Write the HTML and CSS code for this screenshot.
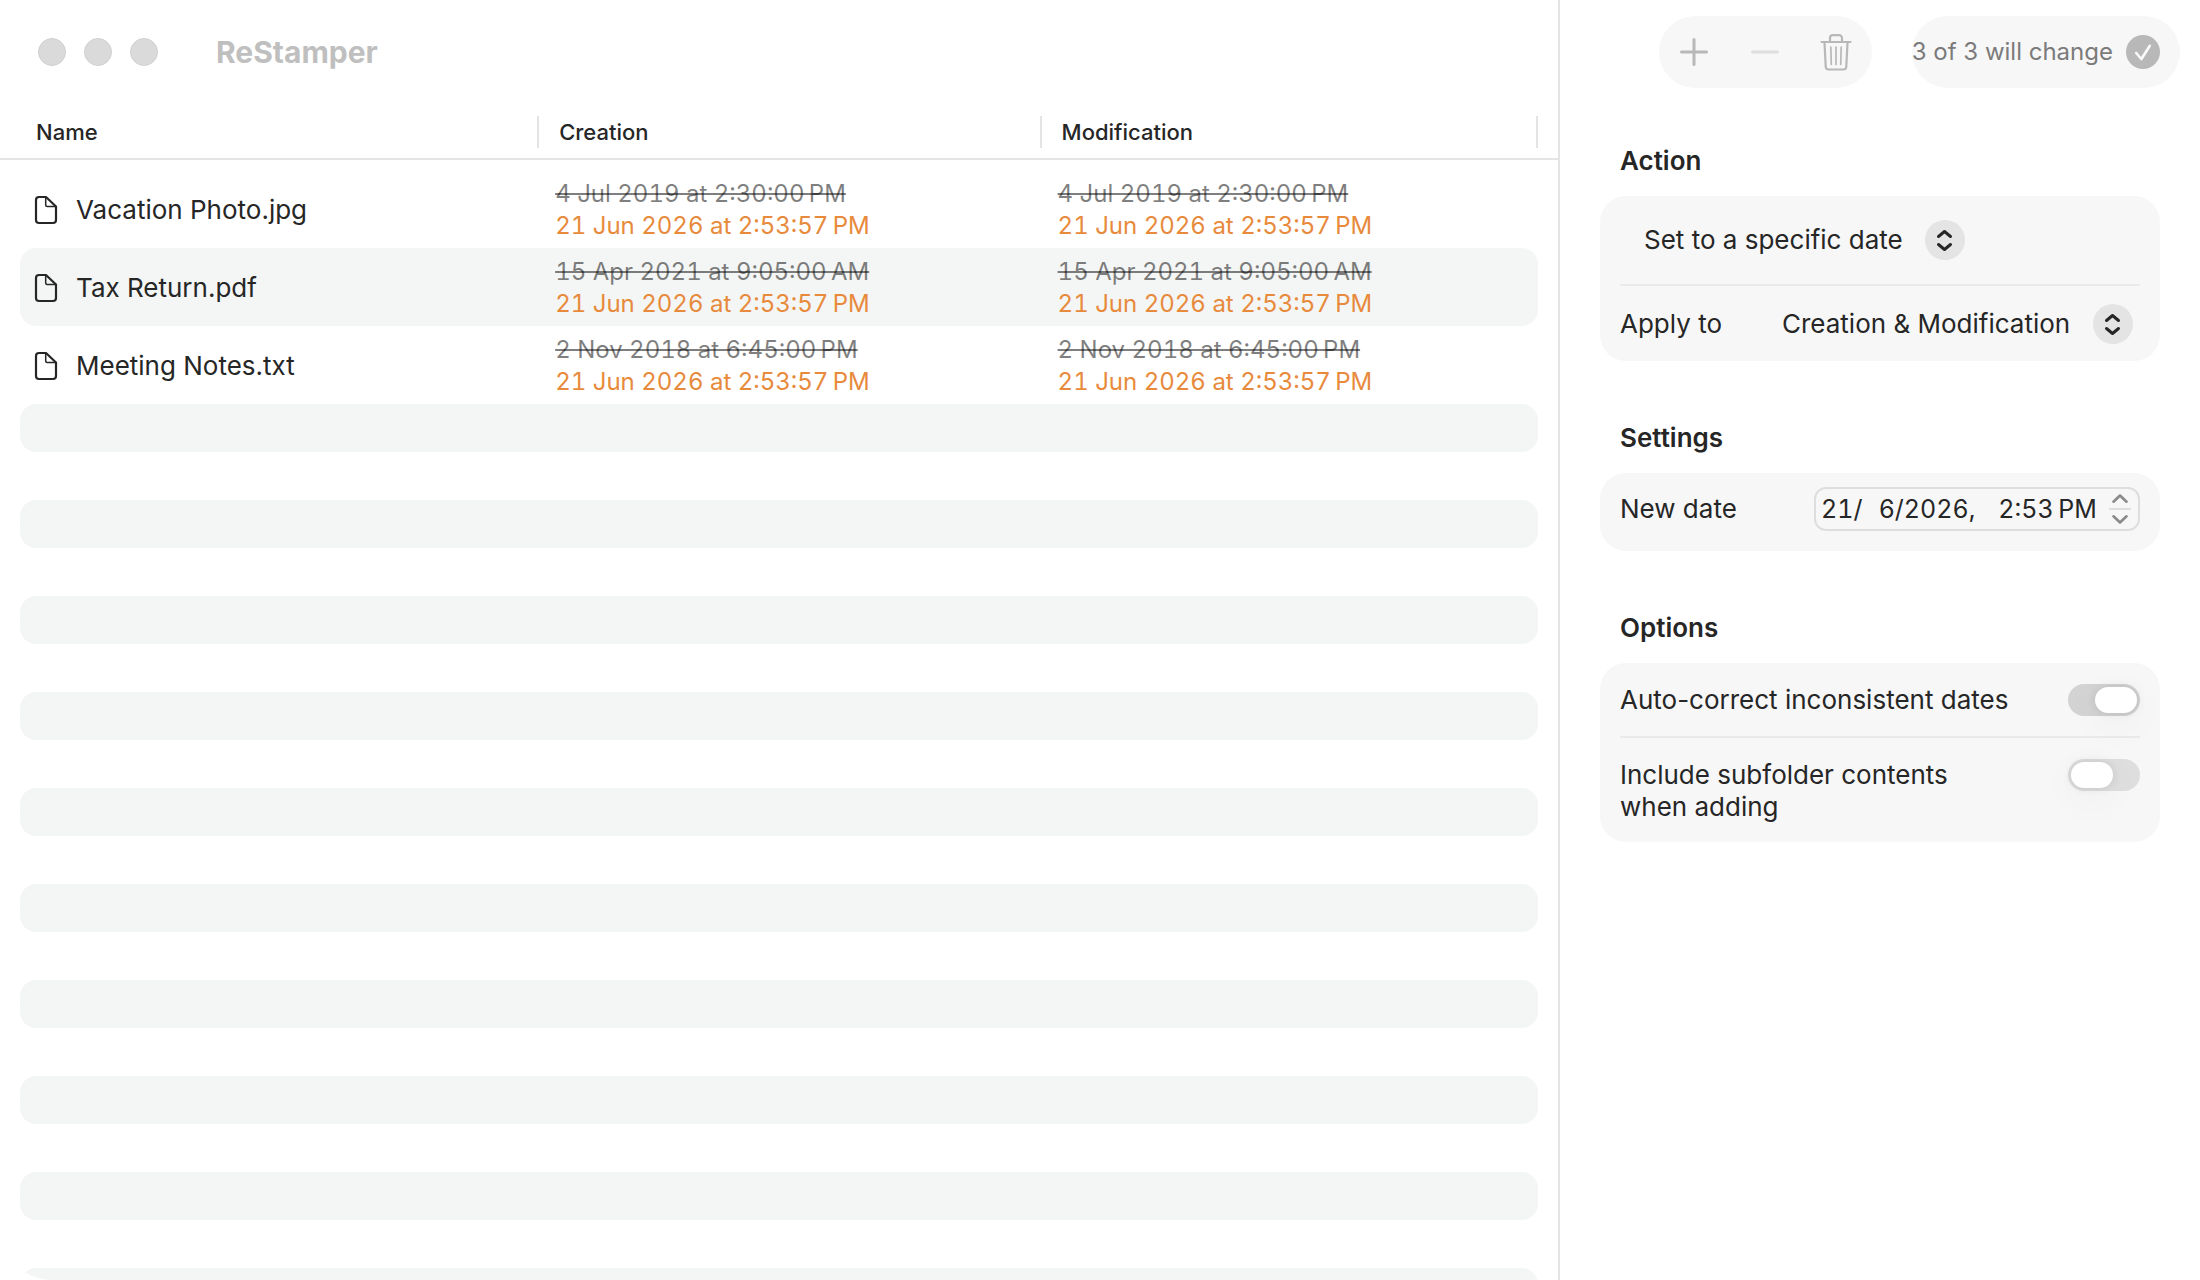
FILE: index.html
```html
<!DOCTYPE html>
<html lang="en">
<head>
<meta charset="utf-8">
<meta name="viewport" content="width=device-width, initial-scale=1">
<title>ReStamper</title>
<link rel="stylesheet" href="styles.css">
</head>
<body>
<svg class="symbols" aria-hidden="true">
  <symbol id="doc" viewBox="0 0 24 30">
    <path d="M5 2H12L22 11.500V25A3 3 0 0 1 19 28H5A3 3 0 0 1 2 25V5A3 3 0 0 1 5 2Z" fill="none" stroke="#262626" stroke-width="2.200" stroke-linejoin="round"/>
    <path d="M11.700 2.500V10a1.500 1.500 0 0 0 1.500 1.500H22" fill="none" stroke="#262626" stroke-width="1.500"/>
  </symbol>
  <symbol id="updown" viewBox="0 0 40 40">
    <circle cx="20" cy="20" r="20" fill="#e4e4e4"/>
    <path d="M13.500 16.500 19.500 11.500 25.500 16.500M13.500 24.500 19.500 29.500 25.500 24.500" fill="none" stroke="#262626" stroke-width="3" stroke-linecap="round" stroke-linejoin="round"/>
  </symbol>
</svg>
<div class="window">
  <main class="content">
    <header class="titlebar">
      <div class="lights"><button type="button" aria-label="Close"></button><button type="button" aria-label="Minimize"></button><button type="button" aria-label="Zoom"></button></div>
      <h1>ReStamper</h1>
    </header>
    <div class="list">
      <table class="files">
        <colgroup><col class="col-name"><col class="col-created"><col></colgroup>
        <thead>
          <tr><th scope="col"><span>Name</span></th><th scope="col"><span>Creation</span></th><th scope="col"><span>Modification</span></th></tr>
        </thead>
        <tbody>
          <tr>
            <td><div class="file"><svg><use href="#doc"/></svg>Vacation Photo.jpg</div></td>
            <td class="dates"><del>4 Jul 2019 at 2:30:00&#8239;PM</del><ins>21 Jun 2026 at 2:53:57&#8239;PM</ins></td>
            <td class="dates"><del>4 Jul 2019 at 2:30:00&#8239;PM</del><ins>21 Jun 2026 at 2:53:57&#8239;PM</ins></td>
          </tr>
          <tr>
            <td><div class="file"><svg><use href="#doc"/></svg>Tax Return.pdf</div></td>
            <td class="dates"><del>15 Apr 2021 at 9:05:00&#8239;AM</del><ins>21 Jun 2026 at 2:53:57&#8239;PM</ins></td>
            <td class="dates"><del>15 Apr 2021 at 9:05:00&#8239;AM</del><ins>21 Jun 2026 at 2:53:57&#8239;PM</ins></td>
          </tr>
          <tr>
            <td><div class="file"><svg><use href="#doc"/></svg>Meeting Notes.txt</div></td>
            <td class="dates"><del>2 Nov 2018 at 6:45:00&#8239;PM</del><ins>21 Jun 2026 at 2:53:57&#8239;PM</ins></td>
            <td class="dates"><del>2 Nov 2018 at 6:45:00&#8239;PM</del><ins>21 Jun 2026 at 2:53:57&#8239;PM</ins></td>
          </tr>
          <tr class="empty"><td></td><td></td><td></td></tr>
          <tr class="empty"><td></td><td></td><td></td></tr>
          <tr class="empty"><td></td><td></td><td></td></tr>
          <tr class="empty"><td></td><td></td><td></td></tr>
          <tr class="empty"><td></td><td></td><td></td></tr>
          <tr class="empty"><td></td><td></td><td></td></tr>
          <tr class="empty"><td></td><td></td><td></td></tr>
          <tr class="empty"><td></td><td></td><td></td></tr>
          <tr class="empty"><td></td><td></td><td></td></tr>
          <tr class="empty"><td></td><td></td><td></td></tr>
          <tr class="empty"><td></td><td></td><td></td></tr>
          <tr class="empty"><td></td><td></td><td></td></tr>
          <tr class="empty"><td></td><td></td><td></td></tr>
          <tr class="empty"><td></td><td></td><td></td></tr>
          <tr class="empty"><td></td><td></td><td></td></tr>
          <tr class="empty"><td></td><td></td><td></td></tr>
          <tr class="empty"><td></td><td></td><td></td></tr>
          <tr class="empty"><td></td><td></td><td></td></tr>
          <tr class="empty"><td></td><td></td><td></td></tr>
        </tbody>
      </table>
    </div>
  </main>

  <aside class="inspector">
    <div class="toolbar">
      <div class="pill tools">
        <button type="button" aria-label="Add files"><svg width="28" height="28" viewBox="0 0 28 28"><path d="M14 1.500V26.500M1.500 14H26.500" stroke="#b8b8b8" stroke-width="3" stroke-linecap="round"/></svg></button>
        <button type="button" aria-label="Remove file" disabled><svg width="28" height="28" viewBox="0 0 28 28"><path d="M1.500 14H26.500" stroke="#dedede" stroke-width="3" stroke-linecap="round"/></svg></button>
        <button type="button" aria-label="Remove all files"><svg width="32" height="38" viewBox="0 0 32 38" fill="none" stroke="#b8b8b8" stroke-linecap="round" stroke-linejoin="round"><path d="M1.500 9H30.500" stroke-width="2.200"/><path d="M10 8.500V5A2.800 2.800 0 0 1 12.800 2.200H19.200A2.800 2.800 0 0 1 22 5V8.500" stroke-width="2.200"/><path d="M4.500 9.500 5.700 33.500A3 3 0 0 0 8.700 36.500H23.300A3 3 0 0 0 26.300 33.500L27.500 9.500" stroke-width="2.200"/><path d="M10.800 14 11.300 31.500M16 14V31.500M21.200 14 20.700 31.500" stroke-width="1.700"/></svg></button>
      </div>
      <div class="pill status">
        <span>3 of 3 will change</span>
        <button type="button" aria-label="Apply changes"><svg width="34" height="34" viewBox="0 0 34 34"><circle cx="17" cy="17" r="17" fill="#b8b8b8"/><path d="M10.200 18 15.400 24 23.800 10.800" fill="none" stroke="#fafafa" stroke-width="2.600" stroke-linecap="round" stroke-linejoin="round"/></svg></button>
      </div>
    </div>

    <form class="sections">
      <section>
        <h2>Action</h2>
        <div class="card">
          <div class="row action">
            <div class="picker">
              <select aria-label="Action"><option>Set to a specific date</option></select>
              <svg><use href="#updown"/></svg>
            </div>
          </div>
          <div class="row apply">
            <label for="apply">Apply to</label>
            <div class="picker">
              <select id="apply"><option>Creation &amp; Modification</option><option>Creation</option><option>Modification</option></select>
              <svg><use href="#updown"/></svg>
            </div>
          </div>
        </div>
      </section>

      <section>
        <h2>Settings</h2>
        <div class="card">
          <div class="row date">
            <label for="newdate">New date</label>
            <div class="datefield">
              <input id="newdate" type="text" value="21/&#8199;6/2026, &#8199;2:53&#8239;PM">
              <div class="stepper">
                <button type="button" aria-label="Later"><svg width="22" height="14" viewBox="0 0 22 14"><path d="M4.500 7.700 11 1.500 17.500 7.700" fill="none" stroke="#8a8a8a" stroke-width="2.600" stroke-linecap="round" stroke-linejoin="round"/></svg></button>
                <button type="button" aria-label="Earlier"><svg width="22" height="14" viewBox="0 0 22 14"><path d="M4.500 6.300 11 12.500 17.500 6.300" fill="none" stroke="#8a8a8a" stroke-width="2.600" stroke-linecap="round" stroke-linejoin="round"/></svg></button>
              </div>
            </div>
          </div>
        </div>
      </section>

      <section>
        <h2>Options</h2>
        <div class="card">
          <div class="row option">
            <label for="autofix">Auto-correct inconsistent dates</label>
            <input class="switch" id="autofix" type="checkbox" role="switch" checked>
          </div>
          <div class="row option tall">
            <label for="subfolders">Include subfolder contents when adding</label>
            <input class="switch" id="subfolders" type="checkbox" role="switch">
          </div>
        </div>
      </section>
    </form>
  </aside>
</div>
</body>
</html>
```
FILE: styles.css
```css
* { box-sizing: border-box; }

body {
  margin: 0;
  background: #fff;
  color: #262626;
  font: 400 26px/32px Inter, "Liberation Sans", sans-serif;
}

button, input, select {
  margin: 0;
  padding: 0;
  border: 0;
  background: none;
  color: inherit;
  font: inherit;
}

svg { display: block; }
.symbols { position: absolute; width: 0; height: 0; }

.window {
  display: flex;
  height: 100vh;
  overflow: hidden;
  border-bottom-left-radius: 52px;
}

.content {
  flex: 1;
  min-width: 0;
  overflow: hidden;
}

/* Title bar */
.titlebar {
  display: flex;
  align-items: center;
  gap: 58px;
  height: 104px;
  padding-left: 38px;
}
.lights { display: flex; gap: 18px; }
.lights button {
  width: 28px;
  height: 28px;
  border: 1px solid #d1d1d1;
  border-radius: 50%;
  background: #dadada;
}
h1 {
  margin: 0;
  color: #bfbfbf;
  font-size: 30px;
  font-weight: 700;
}

/* File list */
.list {
  position: relative;
  padding: 0 20px;
}
/* Rule under the column headers, wider than the table itself */
.list::before {
  content: "";
  position: absolute;
  top: 54px;
  right: 0;
  left: 0;
  height: 2px;
  background: #e4e4e4;
}
.files {
  width: 100%;
  table-layout: fixed;
  border-spacing: 0;
}
.col-name { width: 34.2%; }
.col-created { width: 33.1%; }
th {
  padding: 12px 0;
  font-size: 22px;
  font-weight: 500;
  text-align: left;
}
th span {
  display: block;
  padding-left: 20px;
  border-right: 2px solid #e4e4e4;
}
th:first-child span { padding-left: 16px; }
tbody::before {
  content: "";
  display: block;
  height: 10px;
}
td { padding: 2px 16px 0 14px; }
tbody tr:nth-child(even) td { background: #f4f6f5; }
tbody td:first-child { border-radius: 16px 0 0 16px; }
tbody td:last-child { border-radius: 0 16px 16px 0; }
.empty td { height: 48px; }
.file {
  display: flex;
  align-items: center;
  gap: 18px;
  white-space: nowrap;
}
.file svg { width: 24px; height: 30px; }
.dates {
  padding: 8px 0 6px 16px;
  font-size: 24px;
  font-variant-numeric: tabular-nums;
  white-space: nowrap;
}
.dates del, .dates ins {
  display: block;
  width: max-content;
  text-decoration: none;
}
.dates del {
  color: rgba(0, 0, 0, .5);
  text-decoration: line-through 2px;
}
.dates ins { color: #e88a3c; }

/* Inspector */
.inspector {
  flex: 0 0 642px;
  border-left: 2px solid #e4e4e4;
}
.toolbar {
  display: flex;
  justify-content: flex-end;
  gap: 40px;
  padding: 16px 20px 0;
}
.pill {
  display: flex;
  align-items: center;
  height: 72px;
  border-radius: 36px;
  background: #f7f7f7;
}
.tools button {
  display: grid;
  place-items: center;
  width: 71px;
  height: 72px;
}
.status {
  gap: 13px;
  padding-right: 20px;
  color: #7b7b7b;
  font-size: 24px;
  white-space: nowrap;
}

.sections {
  display: grid;
  gap: 61px;
  padding: 57px 40px 0;
}
h2 {
  margin: 0 20px 19px;
  font-size: 26px;
  font-weight: 600;
}
.card {
  padding: 0 20px;
  border-radius: 26px;
  background: #f7f7f7;
}
.row {
  display: flex;
  align-items: center;
  justify-content: space-between;
}
.row + .row { border-top: 2px solid #eaeaea; }

.picker {
  position: relative;
  display: flex;
  align-items: center;
}
.picker select {
  height: 40px;
  padding-right: 62px;
  appearance: none;
}
.picker svg {
  position: absolute;
  right: 0;
  width: 40px;
  height: 40px;
  pointer-events: none;
}
.action {
  height: 88px;
  justify-content: flex-start;
  padding-left: 24px;
}
.apply { height: 77px; padding-right: 7px; }

.date { height: 78px; padding-bottom: 6px; }
.datefield {
  display: flex;
  align-items: center;
  width: 326px;
  height: 44px;
  padding: 0 7px 0 5px;
  border: 2px solid #dedede;
  border-radius: 12px;
}
.datefield input {
  flex: 1;
  min-width: 0;
  font-size: 25px;
  font-variant-numeric: tabular-nums;
}
.stepper button { display: block; }
.stepper button + button { border-top: 2px solid #dedede; }

.option { height: 73px; }
.option label { max-width: 392px; }
.option.tall {
  align-items: flex-start;
  height: auto;
  padding: 21px 0 19px;
}
.switch {
  width: 72px;
  height: 32px;
  padding: 3px;
  border-radius: 16px;
  background: #dedede;
  appearance: none;
}
.switch::before {
  content: "";
  display: block;
  width: 42px;
  height: 26px;
  border-radius: 13px;
  background: #fff;
  box-shadow: 0 0 10px rgba(0, 0, 0, .1), 0 10px 40px rgba(0, 0, 0, .05);
}
.switch:checked { background: #d3d3d3; }
.switch:checked::before { margin-left: auto; }
```
